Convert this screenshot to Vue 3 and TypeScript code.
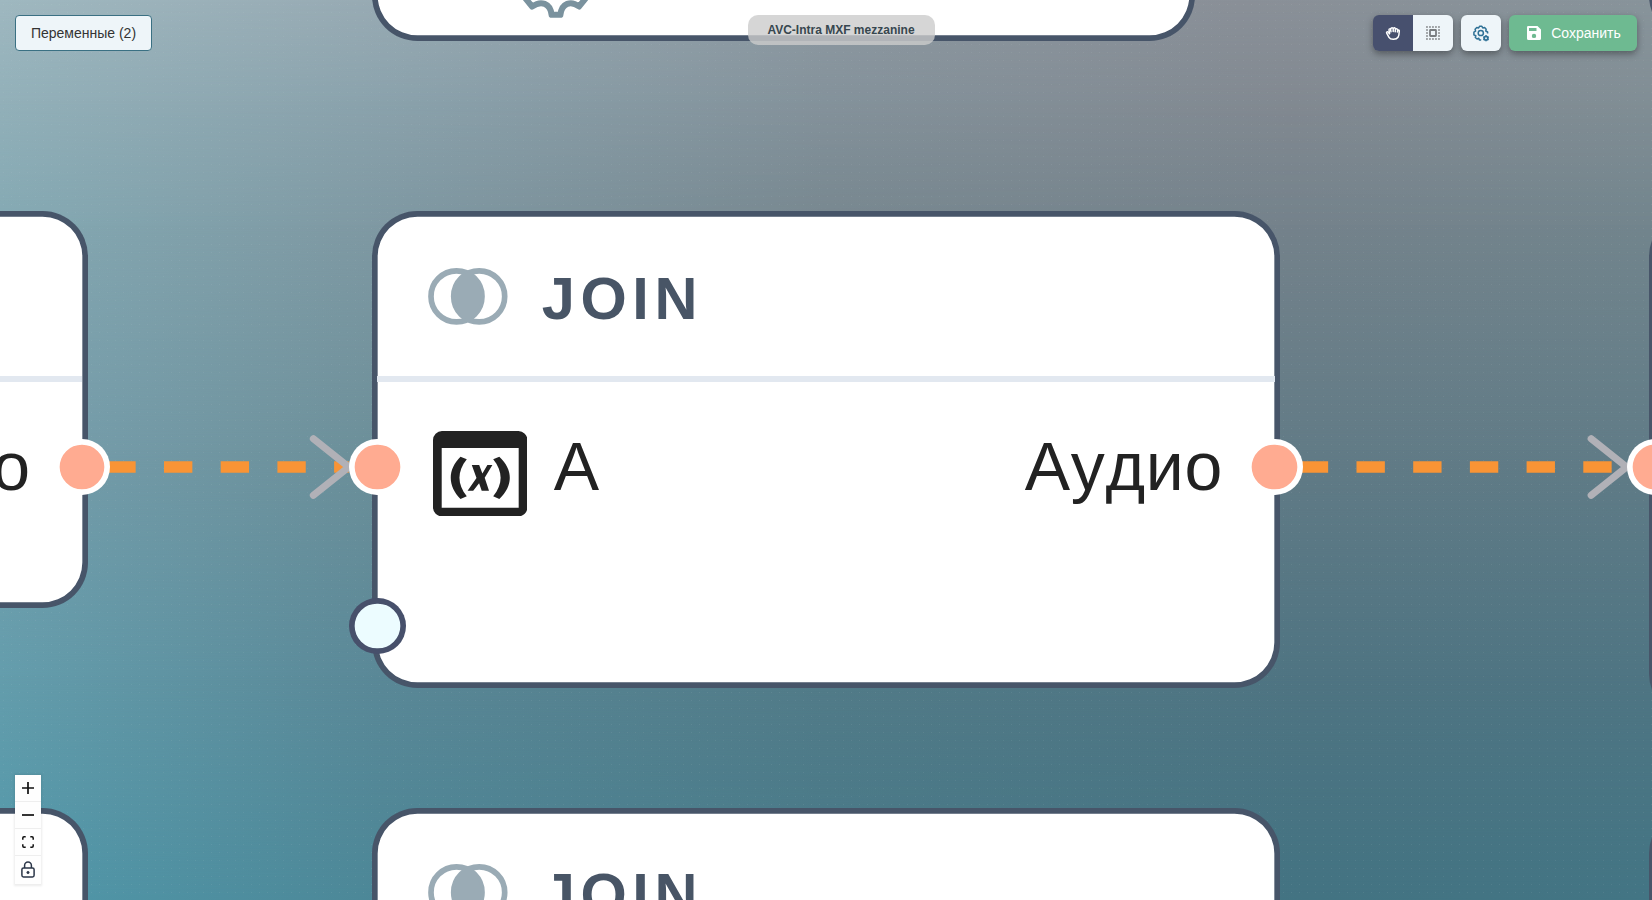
<script setup lang="ts">
interface FlowNode {
  id: string
  cls: string
  title?: string
  input?: string
  output?: string
}

const nodes: FlowNode[] = [
  { id: 'source-top', cls: 'n-top' },
  { id: 'far-top', cls: 'n-far-top' },
  { id: 'left', cls: 'n-left', output: 'Аудио' },
  { id: 'join', cls: 'n-join', title: 'JOIN', input: 'A', output: 'Аудио' },
  { id: 'far', cls: 'n-far' },
  { id: 'left-bottom', cls: 'n-left-bottom' },
  { id: 'join-bottom', cls: 'n-join-bottom', title: 'JOIN' },
  { id: 'far-bottom', cls: 'n-far-bottom' },
]

const edges = [
  { id: 'e1', from: 107.3, to: 348.8 },
  { id: 'e2', from: 1299.8, to: 1626.6 },
]

const handles = ['h-left', 'h-in', 'h-out', 'h-far']
const meshRows = ['r1', 'r2', 'r3', 'r4', 'r5', 'r6']
</script>

<template>
  <main class="editor">
    <div class="backdrop">
      <div v-for="r in meshRows" :key="r" class="mesh" :class="r"></div>
      <div class="dots"></div>
    </div>

    <section class="canvas">
      <article v-for="n in nodes" :key="n.id" class="node" :class="n.cls">
        <header class="head">
          <template v-if="n.title">
            <svg class="venn" viewBox="0 0 80 57" fill="none">
              <g stroke="#9aabb5" stroke-width="5.67">
                <circle cx="28.5" cy="28.4" r="25.5" />
                <circle cx="51.2" cy="28.4" r="25.5" />
              </g>
              <path d="M39.85 4.5A28.3 28.3 0 0 1 39.85 52.3A28.3 28.3 0 0 1 39.85 4.5Z" fill="#9aabb5" />
            </svg>
            <h2>{{ n.title }}</h2>
          </template>
        </header>
        <div class="ports">
          <div v-if="n.input" class="port">
            <svg class="var" viewBox="0 0 94.4 85.4">
              <path
                fill="#222"
                fill-rule="evenodd"
                d="M9 0H85.4A9 9 0 0 1 94.4 9V76.4A9 9 0 0 1 85.4 85.4H9A9 9 0 0 1 0 76.4V9A9 9 0 0 1 9 0ZM8.7 17V76.8H85.7V17Z"
              />
              <path
                fill="#222"
                d="M27.5 25.7L33.8 28.2C24 40.5 24 53 33.8 65.3L27.5 67.9C14.5 55 14.5 38.5 27.5 25.7ZM66.3 25.7L60.2 28.2C70.1 40.5 70.1 53 60.2 65.3L66.3 67.9C80.3 55 80.3 38.5 66.3 25.7Z"
              />
              <path
                fill="#222"
                d="M38.8 34.1H46.2L49.4 42.5L54.4 34.1H59.4L51.7 46.8L56 59.7H48.7L46.1 52.3L40.2 59.7H34.6L43.5 46.9Z"
              />
            </svg>
            <span>{{ n.input }}</span>
          </div>
          <span v-if="n.output" class="out">{{ n.output }}</span>
        </div>
      </article>

      <svg class="layer" viewBox="0 0 1652 900" fill="none">
        <path
          d="M523.5-4L532.1 6.5C541 .3 550.3 3 551.6 14.8H560.4C561.7 3 571 .3 579 6.5L587.6-4"
          stroke="#7a929e"
          stroke-width="6"
          stroke-linejoin="round"
        />
        <g v-for="e in edges" :key="e.id">
          <path :d="`M${e.from} 467H${e.to}`" stroke="#f99435" stroke-width="11.6" stroke-dasharray="28.35 28.35" />
          <path
            :d="`M${e.to - 35.4} 438.7L${e.to} 467L${e.to - 35.4} 495.3`"
            stroke="#b1b1b7"
            stroke-width="7.1"
            stroke-linecap="round"
            stroke-linejoin="round"
          />
        </g>
      </svg>

      <i v-for="h in handles" :key="h" class="handle" :class="h"></i>
      <i class="handle empty"></i>
    </section>

    <button class="vars">Переменные (2)</button>
    <div class="title">AVC-Intra MXF mezzanine</div>

    <div class="toolbar">
      <div class="group">
        <button class="tool active">
          <svg width="16" height="16" viewBox="0 0 16 16" fill="none" stroke="#fff" stroke-width="1.5" stroke-linecap="round" stroke-linejoin="round">
            <path d="M4.5 8.7L3.4 7.3C2.4 6.3 1.2 7.1 1.7 8.1L4 12.3C5.4 14.9 11.4 15 13.2 12C14.1 10.4 14.2 7.9 14.3 5.8C14.3 4.7 12.9 4.6 12.7 5.6L12.4 6.9" />
            <path d="M4.5 8.5L4 4.9C3.9 3.7 5.4 3.5 5.6 4.6L6 6.8M5.8 4.3C5.8 2.4 8.2 2.4 8.2 3.9V6.6M8.2 3.8C8.5 2.3 10.5 2.5 10.4 4.1L10.2 6.8M10.5 4.2C11.4 3.2 12.8 3.8 12.7 5.5" />
          </svg>
        </button>
        <button class="tool">
          <svg width="16" height="16" viewBox="0 0 16 16" fill="none">
            <path
              d="M1 2H15M1 14H15M2 4V13M14 4V13"
              stroke="#a1a5a8"
              stroke-width="1.9"
              stroke-dasharray="1.9 1.1"
            />
            <rect x="5" y="5" width="6" height="6" rx=".5" stroke="#797d80" stroke-width="1.8" />
          </svg>
        </button>
      </div>
      <button class="tool solo">
        <svg width="18" height="18" viewBox="0 0 18 18" fill="none" stroke="#2f7196">
          <path
            d="M9.2 16.1L7.4 15.9L6.8 14.2L5.1 15L3.3 13.5L3.8 11.8L1.9 10.9V8.2L3.6 7.2L3.1 5.3L4.8 3.5L6.6 4L7.5 2.3H9.9L10.8 4L12.6 3.5L14.2 5.2L13.8 7L15.6 8V9.5"
            stroke-width="1.5"
            stroke-linejoin="round"
          />
          <circle cx="8.8" cy="9" r="2.6" stroke-width="1.5" />
          <circle cx="14" cy="14.2" r="1.8" stroke-width="1.7" />
          <path d="M14 11.2V12.2M14 16.2V17.2M11.4 12.7L12.3 13.2M15.7 15.2L16.6 15.7M16.6 12.7L15.7 13.2M12.3 15.2L11.4 15.7" stroke-width="1.7" />
        </svg>
      </button>
      <button class="save">
        <svg width="16" height="16" viewBox="0 0 16 16">
          <path
            fill="#fff"
            fill-rule="evenodd"
            d="M2.3 1H11.5L15 4.5V13.5A1.5 1.5 0 0 1 13.5 15H2.5A1.5 1.5 0 0 1 1 13.5V2.3A1.3 1.3 0 0 1 2.3 1ZM3 3V6H10.5V3ZM8 8.7A2.2 2.2 0 1 0 8 13.1A2.2 2.2 0 1 0 8 8.7Z"
          />
        </svg>
        <span>Сохранить</span>
      </button>
    </div>

    <div class="controls">
      <button><svg viewBox="0 0 12 12"><path d="M6 0V12M0 6H12" stroke="#111" stroke-width="1.7" /></svg></button>
      <button><svg viewBox="0 0 12 12"><path d="M0 6H12" stroke="#111" stroke-width="1.7" /></svg></button>
      <button>
        <svg viewBox="0 0 12 12"><path d="M.8 3.7V2Q.8 .8 2 .8H3.7M8.3 .8H10Q11.2 .8 11.2 2V3.7M11.2 8.3V10Q11.2 11.2 10 11.2H8.3M3.7 11.2H2Q.8 11.2 .8 10V8.3" fill="none" stroke="#111" stroke-width="1.5" /></svg>
      </button>
      <button class="lock">
        <svg viewBox="0 0 14 17" fill="none" stroke="#2b3648" stroke-width="1.5">
          <rect x=".9" y="7" width="12.2" height="8.9" rx="1.6" />
          <path d="M3.6 7V4.4A3.4 3.4 0 0 1 10.4 4.4V7" />
          <circle cx="7" cy="11.5" r="1.2" fill="#2b3648" stroke-width=".6" />
        </svg>
      </button>
    </div>
  </main>
</template>

<style>
body {
  margin: 0;
  overflow: hidden;
}
</style>

<style scoped>
.editor {
  position: relative;
  width: 1652px;
  height: 900px;
  overflow: hidden;
  font-family: "Liberation Sans", Arial, sans-serif;
  color: #222;
}
.backdrop,
.mesh,
.dots,
.canvas,
.layer {
  position: absolute;
  inset: 0;
}
.layer {
  width: 1652px;
  height: 900px;
}
.r1 {
  background: linear-gradient(90deg, #9fb8c0, #97a9b2 25%, #8e99a1 50%, #8a9098 75%, #88949b);
}
.r2 {
  background: linear-gradient(90deg, #92b0b9, #8aa1ab 25%, #84929b 50%, #828991 78%, #818e95);
  mask-image: linear-gradient(transparent 0, #000 100px);
}
.r3 {
  background: linear-gradient(90deg, #84a9b3, #7e97a1 25%, #77878f 50%, #74828b 78%, #72858d);
  mask-image: linear-gradient(transparent 100px, #000 225px);
}
.r4 {
  background: linear-gradient(90deg, #769fad, #6c8f99 23%, #65818c 50%, #627b86 79%, #617c87);
  mask-image: linear-gradient(transparent 225px, #000 450px);
}
.r5 {
  background: linear-gradient(90deg, #649dac, #5a8897 23%, #527b88 50%, #4f7482 79%, #4f7583);
  mask-image: linear-gradient(transparent 450px, #000 675px);
}
.r6 {
  background: linear-gradient(90deg, #5198aa, #4c8797 23%, #477a89 50%, #437382 79%, #437584);
  mask-image: linear-gradient(transparent 675px, #000 900px);
}
.dots {
  background: radial-gradient(circle at 3.5px 4.5px, rgba(200, 220, 220, 0.09) 0.6px, transparent 0.8px) 0 0 / 8px 8px;
}
.node {
  position: absolute;
  box-sizing: border-box;
  display: flex;
  flex-direction: column;
  padding: 4px;
  border-radius: 45.4px;
  background: #fff content-box;
  box-shadow: inset 0 0 0 5.67px #475569;
}
.n-top {
  left: 371.8px;
  top: -400px;
  width: 823px;
  height: 441.2px;
}
.n-far-top {
  left: 1649.3px;
  top: -400px;
  width: 900px;
  height: 441.2px;
}
.n-left {
  left: -812px;
  top: 211.3px;
  width: 900px;
  height: 397.2px;
}
.n-join {
  left: 371.8px;
  top: 211.3px;
  width: 908.4px;
  height: 477px;
}
.n-far {
  left: 1649.3px;
  top: 211.3px;
  width: 900px;
  height: 508px;
}
.n-left-bottom {
  left: -812px;
  top: 807.8px;
  width: 900px;
  height: 477px;
}
.n-join-bottom {
  left: 371.8px;
  top: 807.8px;
  width: 908.4px;
  height: 477px;
}
.n-far-bottom {
  left: 1649.3px;
  top: 807.8px;
  width: 900px;
  height: 477px;
}
.head {
  box-sizing: border-box;
  flex: none;
  display: flex;
  align-items: center;
  height: 164.9px;
  margin: 1.67px 1.67px 0;
  padding-left: 50.7px;
  border-bottom: 6px solid #e2e8f0;
}
.n-top .head,
.n-far-top .head {
  border-color: transparent;
}
.venn {
  width: 80px;
  height: 57px;
  flex: none;
}
h2 {
  margin: 4.4px 0 0 33.5px;
  font-size: 59.5px;
  line-height: 68px;
  font-weight: 700;
  letter-spacing: 5.67px;
  color: #485566;
}
.ports {
  display: flex;
  justify-content: space-between;
  margin: 0 1.67px;
  padding: 44.8px 51.5px 0 55.1px;
  font-size: 68px;
  line-height: 78px;
  font-kerning: none;
  letter-spacing: 0.68px;
}
.port {
  display: flex;
}
.var {
  width: 94.4px;
  height: 85.4px;
  margin: 3.9px 26.9px 0 0;
}
.out {
  margin-left: auto;
}
.handle {
  position: absolute;
  box-sizing: border-box;
  width: 56.7px;
  height: 56.7px;
  top: 438.7px;
  padding: 4px;
  box-shadow: inset 0 0 0 5.67px #fff;
  border-radius: 50%;
  background: #ffab91 content-box;
}
.h-left {
  left: 53.7px;
}
.h-in {
  left: 349px;
}
.h-out {
  left: 1246.4px;
}
.h-far {
  left: 1626.8px;
}
.empty {
  left: 349px;
  top: 597.7px;
  box-shadow: inset 0 0 0 5.67px #47506b;
  background: #ecfcff content-box;
}
button {
  font: 14px "Liberation Sans", Arial, sans-serif;
  border: 0;
  margin: 0;
  padding: 0;
  display: flex;
  align-items: center;
  justify-content: center;
}
.vars {
  position: absolute;
  left: 15px;
  top: 15px;
  width: 137px;
  height: 36px;
  border: 1px solid #3a7083;
  border-radius: 4px;
  background: #eef5f9;
  color: #333;
}
.title {
  position: absolute;
  left: 747.5px;
  top: 15px;
  width: 187px;
  height: 30px;
  border-radius: 10px;
  background: rgba(204, 204, 204, 0.8);
  color: #37474f;
  font-size: 12px;
  line-height: 31px;
  font-weight: 700;
  text-align: center;
}
.toolbar {
  position: absolute;
  top: 15px;
  right: 15px;
  display: flex;
  gap: 8px;
}
.group,
.solo,
.save {
  border-radius: 6px;
  box-shadow: 0 3px 7px rgba(0, 0, 0, 0.36);
}
.group {
  display: flex;
  overflow: hidden;
}
.tool {
  width: 40px;
  height: 36px;
  background: #eef5f9;
}
.active {
  background: #47506e;
}
.save {
  box-sizing: border-box;
  width: 128px;
  height: 36px;
  padding-left: 1px;
  gap: 9px;
  background: #6eba91;
  color: #fff;
}
.controls {
  position: absolute;
  left: 15px;
  top: 775px;
  width: 26px;
  box-shadow: 0 0 2px 1px rgba(0, 0, 0, 0.08);
}
.controls button {
  box-sizing: border-box;
  width: 26px;
  height: 27px;
  background: #fefefe;
  border-bottom: 1px solid #eee;
}
.controls svg {
  width: 12px;
  height: 12px;
}
.controls .lock {
  height: 29px;
  padding-bottom: 2px;
}
.controls .lock svg {
  width: 14px;
  height: 17px;
}
</style>
